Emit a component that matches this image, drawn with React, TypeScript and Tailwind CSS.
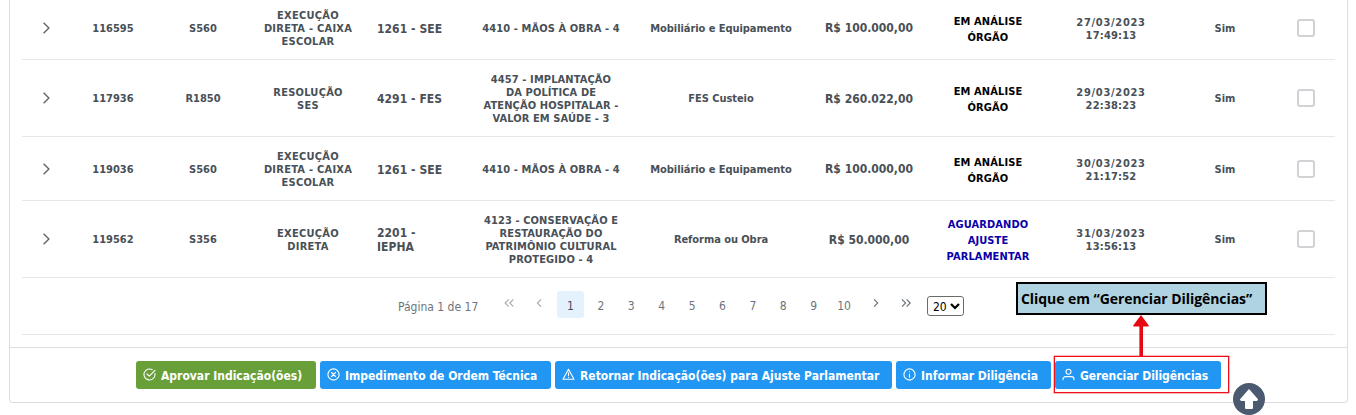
import type { ReactNode } from "react";

type Row = {
  id: string;
  height: string;
  code: string;
  kind: string[];
  unit: string[];
  action: string[];
  object: string;
  value: string;
  status: string[];
  statusColor: string;
  date: string;
  time: string;
};

const rows: Row[] = [
  {
    id: "116595",
    height: "h-[64px]",
    code: "S560",
    kind: ["EXECUÇÃO", "DIRETA - CAIXA", "ESCOLAR"],
    unit: ["1261 - SEE"],
    action: ["4410 - MÃOS À OBRA - 4"],
    object: "Mobiliário e Equipamento",
    value: "R$ 100.000,00",
    status: ["EM ANÁLISE", "ÓRGÃO"],
    statusColor: "text-black",
    date: "27/03/2023",
    time: "17:49:13",
  },
  {
    id: "117936",
    height: "h-[77px]",
    code: "R1850",
    kind: ["RESOLUÇÃO", "SES"],
    unit: ["4291 - FES"],
    action: ["4457 - IMPLANTAÇÃO", "DA POLÍTICA DE", "ATENÇÃO HOSPITALAR -", "VALOR EM SAÚDE - 3"],
    object: "FES Custeio",
    value: "R$ 260.022,00",
    status: ["EM ANÁLISE", "ÓRGÃO"],
    statusColor: "text-black",
    date: "29/03/2023",
    time: "22:38:23",
  },
  {
    id: "119036",
    height: "h-[64px]",
    code: "S560",
    kind: ["EXECUÇÃO", "DIRETA - CAIXA", "ESCOLAR"],
    unit: ["1261 - SEE"],
    action: ["4410 - MÃOS À OBRA - 4"],
    object: "Mobiliário e Equipamento",
    value: "R$ 100.000,00",
    status: ["EM ANÁLISE", "ÓRGÃO"],
    statusColor: "text-black",
    date: "30/03/2023",
    time: "21:17:52",
  },
  {
    id: "119562",
    height: "h-[77px]",
    code: "S356",
    kind: ["EXECUÇÃO", "DIRETA"],
    unit: ["2201 -", "IEPHA"],
    action: ["4123 - CONSERVAÇÃO E", "RESTAURAÇÃO DO", "PATRIMÔNIO CULTURAL", "PROTEGIDO - 4"],
    object: "Reforma ou Obra",
    value: "R$ 50.000,00",
    status: ["AGUARDANDO", "AJUSTE", "PARLAMENTAR"],
    statusColor: "text-[#0a00a8]",
    date: "31/03/2023",
    time: "13:56:13",
  },
];

function Lines({ items, className = "" }: { items: string[]; className?: string }) {
  return (
    <div className={`whitespace-nowrap ${className}`}>
      {items.map((t) => (
        <div key={t}>{t}</div>
      ))}
    </div>
  );
}

function TableRow({ row }: { row: Row }) {
  return (
    <div
      className={`grid shrink-0 grid-cols-[48px_86px_94px_116px_97px_176px_164px_132px_106px_140px_88px_66px] items-center border-b border-[#e6e7e9] text-center text-[11px] leading-[13px] font-bold text-[#495057] ${row.height}`}
    >
      <svg className="mx-auto h-3 w-3" viewBox="0 0 12 12" fill="none" stroke="#5f666d" strokeWidth="1.4">
        <path d="M3.6 0.8 8.9 6 3.6 11.2" />
      </svg>
      <Lines items={[row.id]} className="pt-px" />
      <Lines items={[row.code]} className="pt-px" />
      <Lines items={row.kind} className="pt-[2px] tracking-[0.25px]" />
      <Lines items={row.unit} className="pt-[2px] pl-[11px] text-left text-[12px] leading-[14px] tracking-[0.05px]" />
      <Lines items={row.action} className="pt-[2px] tracking-[0.1px]" />
      <Lines items={[row.object]} className="pt-px tracking-[-0.06px]" />
      <Lines items={[row.value]} className="pt-[2px] text-[12px]" />
      <Lines items={row.status} className={`pt-[4px] leading-4 tracking-[0.12px] ${row.statusColor}`} />
      <div className="pt-[2px] whitespace-nowrap">
        <div className="tracking-[0.7px]">{row.date}</div>
        <div className="tracking-[0.2px]">{row.time}</div>
      </div>
      <Lines items={["Sim"]} className="pt-px" />
      <div className="flex justify-center pl-2">
        <span className="h-[18px] w-[18px] rounded-[3px] border-2 border-[#d0d2d5]" />
      </div>
    </div>
  );
}

function Chevron({ d, dim }: { d: string; dim?: boolean }) {
  return (
    <svg
      className="h-3 w-3"
      viewBox="0 0 12 12"
      fill="none"
      stroke={dim ? "#a9aeb3" : "#6c757d"}
      strokeWidth="1.2"
    >
      <path d={d} />
    </svg>
  );
}

function Action({ className, icon, children }: { className: string; icon: ReactNode; children: ReactNode }) {
  return (
    <button
      className={`flex h-7 shrink-0 items-center rounded-[3px] pl-[7px] text-[12px] font-bold whitespace-nowrap text-white ${className}`}
    >
      <svg className="mr-[5px] mb-px h-[13px] w-[13px]" viewBox="0 0 13 13" fill="none" stroke="white" strokeWidth="1.1" strokeLinecap="round" strokeLinejoin="round">
        {icon}
      </svg>
      <span className="pt-px">{children}</span>
    </button>
  );
}

export default function App() {
  return (
    <div className="relative h-[415px] w-[1356px] overflow-hidden bg-white font-['DejaVu_Sans_Condensed','DejaVu_Sans',sans-serif]">
      <div className="ml-[9px] flex h-[403px] w-[1339px] flex-col rounded-b-[4px] border-x border-b border-[#dcdee1]">
        <div className="-mt-1 ml-3 flex w-[1313px] flex-col">
          {rows.map((r) => (
            <TableRow key={r.id} row={r} />
          ))}
          <div className="flex h-[57px] items-center border-b border-[#e6e7e9] pl-[376px] text-[12px] text-[#6c757d]">
            <span className="w-[96px] pt-px whitespace-nowrap">Página 1 de 17</span>
            <div className="flex h-7 w-[30px] items-start justify-center pt-[5px]">
              <Chevron dim d="M5.8 2.4 2.2 6 5.8 9.6M10.4 2.4 6.8 6 10.4 9.6" />
            </div>
            <div className="flex h-7 w-[33px] items-start justify-center pt-[5px] pr-1">
              <Chevron dim d="M8 2.4 4.4 6 8 9.6" />
            </div>
            <div className="mb-[3px] flex">
              {[1, 2, 3, 4, 5, 6, 7, 8, 9, 10].map((n) => (
                <span
                  key={n}
                  className={`mr-[3.4px] flex h-[27px] w-[27px] items-center justify-center rounded-[3px] pt-[3px] ${
                    n === 1 ? "bg-[#e3f2fd] text-[#495057]" : ""
                  }`}
                >
                  {n}
                </span>
              ))}
            </div>
            <div className="flex h-7 w-[30px] items-start justify-center pt-[5px]">
              <Chevron d="M4.1 2.4 7.7 6 4.1 9.6" />
            </div>
            <div className="flex h-7 w-[32px] items-start justify-center pt-[5px]">
              <Chevron d="M1 2.4 4.6 6 1 9.6M5.6 2.4 9.2 6 5.6 9.6" />
            </div>
            <div className="ml-1 flex h-5 w-[37px] items-center rounded-[3px] border border-[#6b6b6b] pt-px pl-[5px] text-[12px] text-black">
              20
              <svg className="mb-px ml-[3px] h-[10px] w-[10px]" viewBox="0 0 10 10" fill="none" stroke="black" strokeWidth="2.2">
                <path d="M1 3 5 7 9 3" />
              </svg>
            </div>
          </div>
        </div>
        <div className="mt-3 flex flex-1 gap-1 border-t border-[#dcdee1] pt-[13px] pl-[126px]">
          <Action className="w-[180px] bg-[#689f38]" icon={<path d="M12 5.6V6.5A5.5 5.5 0 1 1 9.2 1.7M4 6 6.3 8.2 12 2.4" />}>
            Aprovar Indicação(ões)
          </Action>
          <Action
            className="w-[231px] bg-[#2196f3]"
            icon={
              <>
                <circle cx="6.5" cy="6.5" r="5.6" />
                <path d="M4.5 4.5 8.5 8.5M8.5 4.5 4.5 8.5" />
              </>
            }
          >
            Impedimento de Ordem Técnica
          </Action>
          <Action className="w-[337px] bg-[#2196f3]" icon={<path d="M6.5 1.2 12 11.2H1ZM6.5 4.8V7.6M6.5 9.3V9.4" />}>
            Retornar Indicação(ões) para Ajuste Parlamentar
          </Action>
          <Action
            className="w-[155px] bg-[#2196f3]"
            icon={
              <>
                <circle cx="6.5" cy="6.5" r="5.6" />
                <path d="M6.5 6V9.3M6.5 3.7V3.8" />
              </>
            }
          >
            Informar Diligência
          </Action>
          <Action
            className="w-[166px] bg-[#2196f3] tracking-[-0.07px]"
            icon={
              <>
                <circle cx="6.5" cy="3.8" r="2.5" />
                <path d="M1 11.8V11.2A2.6 2.6 0 0 1 3.6 8.6H9.4A2.6 2.6 0 0 1 12 11.2V11.8" />
              </>
            }
          >
            Gerenciar Diligências
          </Action>
        </div>
      </div>

      <div className="absolute top-[282px] left-[1016px] flex h-[33px] w-[251px] items-center border-2 border-black bg-[#b0d3e1] pl-[3px] font-['Open_Sans',sans-serif] text-[14px] font-bold tracking-[-0.06px] whitespace-nowrap text-black">
        Clique em “Gerenciar Diligências”
      </div>
      <svg className="absolute top-[315px] left-[1133px] h-[42px] w-4" viewBox="0 0 16 42" fill="#e60914">
        <path d="M8 0 15.8 10.5Q16 11.5 15 11.5H10V42H6.4V11.5H1Q0 11.5 .2 10.5Z" />
      </svg>
      <div className="absolute top-[356px] left-[1054px] h-[37px] w-[175px] border border-[#f0101c] ring-[0.5px] ring-[#f0101c]/60" />
      <svg className="absolute top-[383px] left-[1233px] h-8 w-8" viewBox="0 0 32 32">
        <circle cx="16" cy="16" r="16" fill="#4b5a70" />
        <path d="M16 6 25 16.3Q25 18 23.5 18H20V25Q20 26 19 26H13Q12 26 12 25V18H8.5Q7 18 7 16.3Z" fill="white" />
      </svg>
    </div>
  );
}
